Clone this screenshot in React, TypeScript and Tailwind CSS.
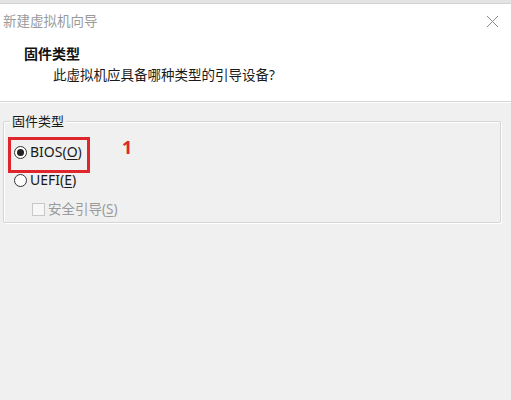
import React from "react";

const cjk = { fontFamily: '"Noto Sans", "Noto Sans CJK SC", sans-serif' };

const Radio = ({ checked, label, keyChar }: { checked?: boolean; label: string; keyChar: string }) => (
  <div className="flex h-[20px] items-center">
    <span className="ml-[10px] flex h-[13px] w-[13px] items-center justify-center rounded-full border border-[#333] bg-white">
      {checked ? <span className="h-[7px] w-[7px] rounded-full bg-[#222]" /> : null}
    </span>
    <span className="ml-[3px] text-[14px] leading-[20px] text-[#1a1a1a]">
      {label}(<span className="underline underline-offset-2">{keyChar}</span>)
    </span>
  </div>
);

export default function App() {
  return (
    <div className="h-[400px] w-[511px] overflow-hidden bg-[#f0f0f0]" style={cjk}>
      <div className="h-[4px] border-b border-[#d2d2d2] bg-[#e4e4e4]" />
      <div className="h-[98px] border-b border-[#d6d6d6] bg-white">
        <div className="flex items-center justify-between pl-[3px] pr-[12px] pt-[7px]">
          <span className="text-[13.5px] leading-[20px] text-[#9a9a9a]">新建虚拟机向导</span>
          <svg width="13" height="13" viewBox="0 0 13 13" className="mt-[1px]">
            <path d="M1 1 L12 12 M12 1 L1 12" stroke="#8a8a8a" strokeWidth="1" fill="none" />
          </svg>
        </div>
        <div className="pl-[24px] pt-[13px] text-[14px] font-bold leading-[20px] text-[#111]">固件类型</div>
        <div className="pl-[53px] pt-[1px] text-[13.5px] leading-[20px] text-[#1a1a1a]">此虚拟机应具备哪种类型的引导设备?</div>
      </div>
      <div className="h-px bg-white" />
      <div className="relative mx-[3px] mt-[18px] h-[102px] w-[498px] rounded-[2px] border border-[#d5d5d5] shadow-[inset_1px_1px_0_#fff,1px_1px_0_#fff]">
        <span className="absolute left-[6px] top-[-10px] bg-[#f0f0f0] px-[2px] text-[13px] leading-[18px] text-[#1a1a1a]">固件类型</span>
        <div className="flex flex-col pt-[20px]">
          <Radio checked label="BIOS" keyChar="O" />
          <div className="mt-[8px]">
            <Radio label="UEFI" keyChar="E" />
          </div>
          <div className="mt-[9px] flex h-[20px] items-center">
            <span className="ml-[28px] h-[13px] w-[13px] border border-[#c8c8c8] bg-[#f7f7f7]" />
            <span className="ml-[3px] text-[13.5px] leading-[20px] text-[#9a9a9a]">
              安全引导(<span className="underline underline-offset-2">S</span>)
            </span>
          </div>
        </div>
        <div className="absolute left-[4px] top-[15px] h-[36px] w-[82px] border-[3px] border-[#e0262d]" />
        <span className="absolute left-[118px] top-[13px] text-[18px] font-bold leading-[24px] text-[#e0262d]">1</span>
      </div>
    </div>
  );
}
